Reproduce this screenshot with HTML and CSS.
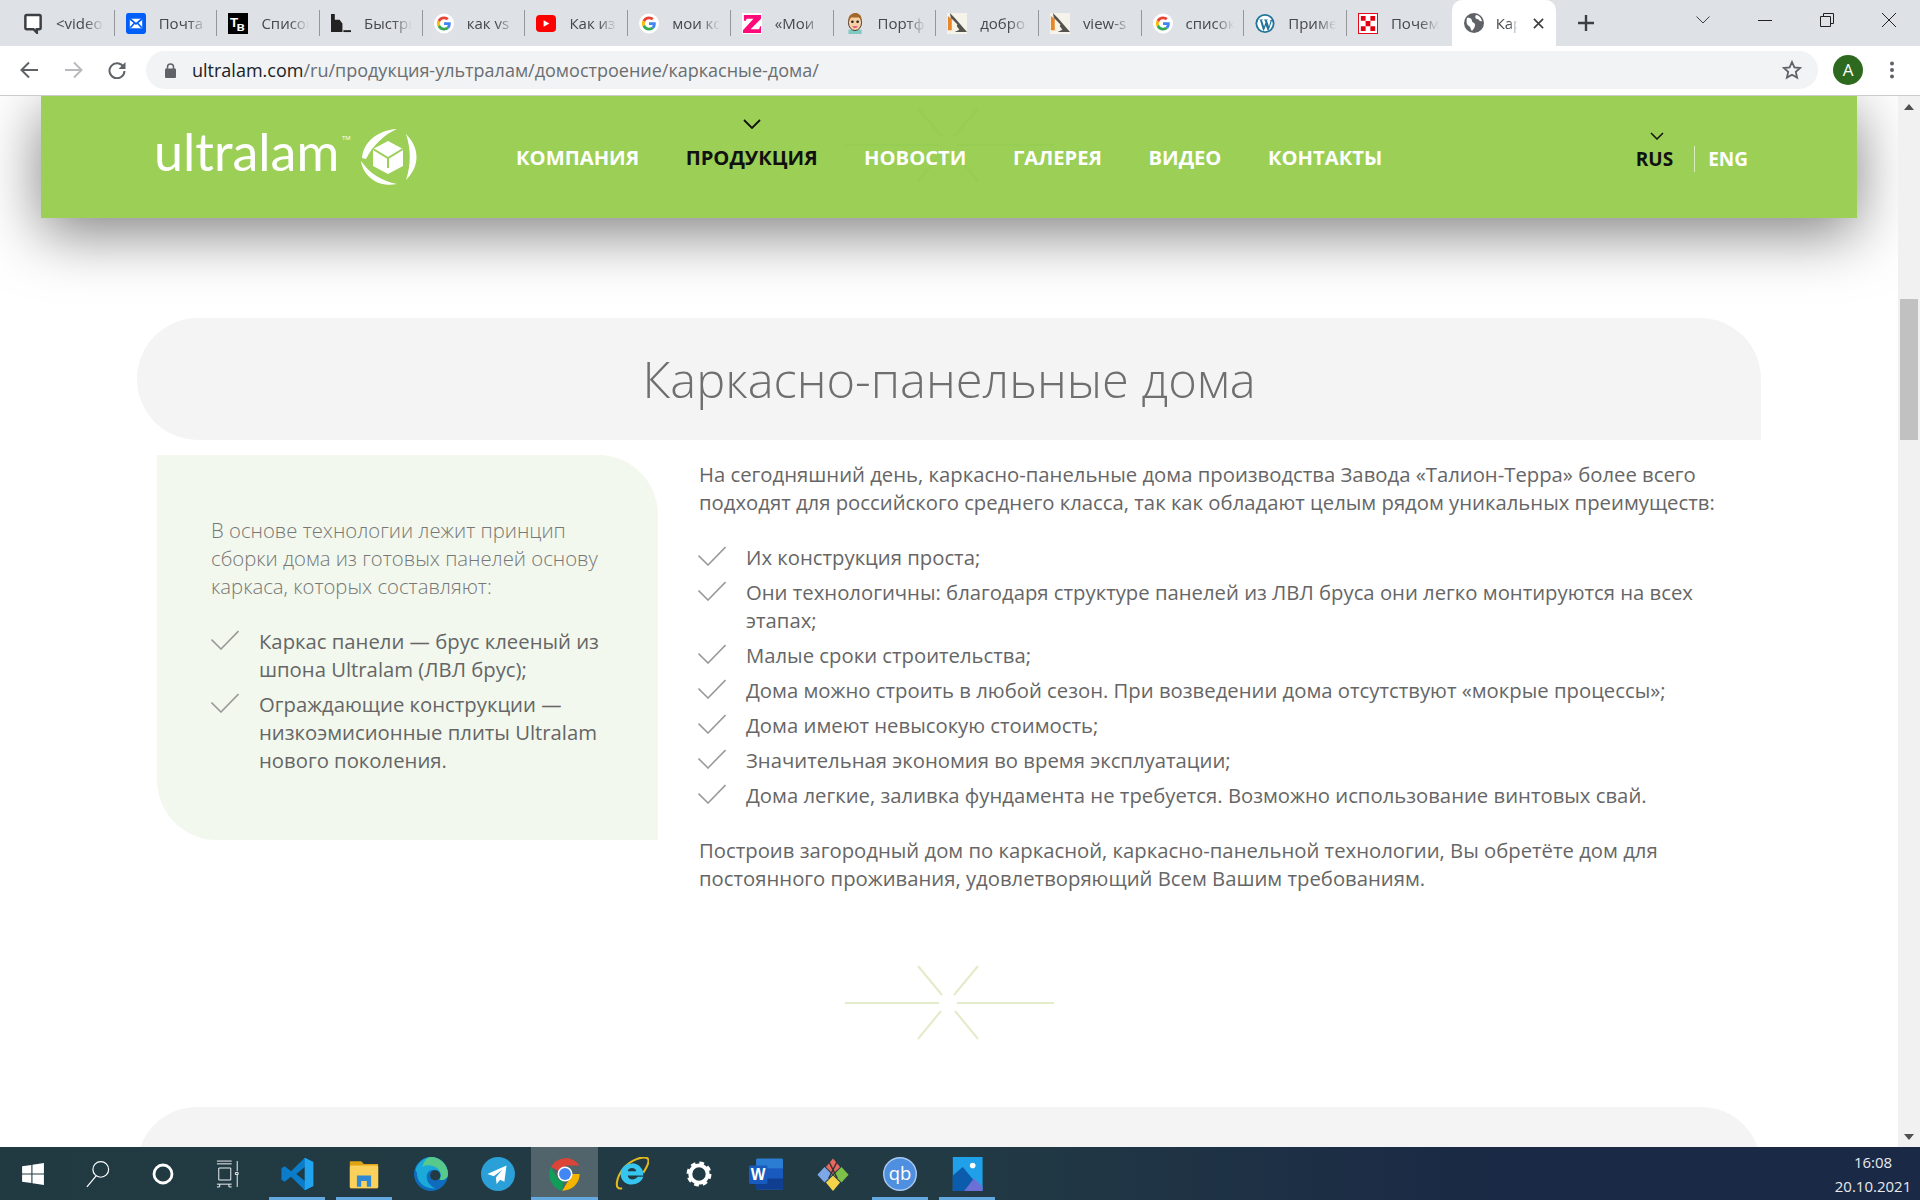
FILE: index.html
```html
<!DOCTYPE html>
<html lang="ru">
<head>
  <meta charset="UTF-8" />
  <title>Каркасно-панельные дома</title>
  <link rel="stylesheet" href="styles.css">
</head>
<body>
  <!-- shared icons -->
  <svg class="defs" width="0" height="0">
    <symbol id="i-g" viewBox="-10 -10 68 68">
      <circle cx="24" cy="24" r="34" fill="#fff"/>
      <path fill="#EA4335" d="M24 9.5c3.54 0 6.71 1.22 9.21 3.6l6.85-6.85C35.9 2.38 30.47 0 24 0 14.62 0 6.51 5.38 2.56 13.22l7.98 6.19C12.43 13.72 17.74 9.5 24 9.5z"/>
      <path fill="#4285F4" d="M46.98 24.55c0-1.57-.15-3.09-.38-4.55H24v9.02h12.94c-.58 2.96-2.26 5.48-4.78 7.18l7.73 6c4.51-4.18 7.09-10.36 7.09-17.65z"/>
      <path fill="#FBBC05" d="M10.53 28.59c-.48-1.45-.76-2.99-.76-4.59s.27-3.14.76-4.59l-7.98-6.19C.92 16.46 0 20.12 0 24c0 3.88.92 7.54 2.56 10.78l7.97-6.19z"/>
      <path fill="#34A853" d="M24 48c6.48 0 11.93-2.13 15.89-5.81l-7.73-6c-2.15 1.45-4.92 2.3-8.16 2.3-6.26 0-11.57-4.22-13.47-9.91l-7.98 6.19C6.51 42.62 14.62 48 24 48z"/>
    </symbol>
    <symbol id="i-fox" viewBox="0 0 21 22">
      <rect width="21" height="22" fill="#f6f3ea"/>
      <path d="M1 3 L8 9 L6 18 H1z" fill="#e8872a"/>
      <path d="M3 0 L8 5 L21 20 H8 L13 17.500 L4 5z" fill="#55534e"/>
      <path d="M5 6 L11 12 L8 17 L5 18z" fill="#f9f3e6"/>
    </symbol>
    <symbol id="i-check" viewBox="0 0 28 20">
      <path d="M.5 9.5L10 19 27.5 1" fill="none" stroke="#9a9a9a" stroke-width="1.6"/>
    </symbol>
    <symbol id="i-star" viewBox="0 0 216 76">
      <path d="M0 38H94M112 38H209M73 1L97 30M133 1L109 30M96 46L73 74M110 46L133 74" fill="none" stroke-width="2"/>
    </symbol>
  </svg>

  <!-- browser tabs -->
  <div class="tabstrip">
    <div class="tab">
      <svg class="tab-icon" viewBox="0 0 20 22"><path d="M3.5 2h13A1.5 1.5 0 0 1 18 3.5v12a1.5 1.5 0 0 1-1.5 1.5H14v3.5L10.5 17h-7A1.5 1.5 0 0 1 2 15.500v-12A1.500 1.500 0 0 1 3.500 2z" fill="#fff" stroke="#3c4043" stroke-width="2.600"/></svg>
      <span class="tab-title">&lt;video</span>
    </div>
    <div class="tab">
      <svg class="tab-icon" viewBox="0 0 21 22"><rect width="21" height="22" rx="2.500" fill="#005ff9"/><rect x="4" y="6" width="13" height="10" fill="#fff"/><path d="M4 6l6.500 5.500L17 6M4.500 15.500l4.500-5M16.500 15.500l-4.500-5" fill="none" stroke="#005ff9" stroke-width="1.800"/></svg>
      <span class="tab-title">Почта</span>
    </div>
    <div class="tab">
      <svg class="tab-icon" viewBox="0 0 21 22"><rect width="21" height="29" fill="#000"/><text x="2" y="15" class="tp-letters">Т</text><text x="9" y="19" class="tp-letters">в</text></svg>
      <span class="tab-title">Список</span>
    </div>
    <div class="tab">
      <svg class="tab-icon" viewBox="0 0 21 22"><path d="M0 1h4v6h5l3 4v9H0z" fill="#222"/><rect x="13" y="18" width="8" height="2" fill="#222"/></svg>
      <span class="tab-title">Быстрый</span>
    </div>
    <div class="tab"><svg class="tab-icon"><use href="#i-g"/></svg><span class="tab-title">как vs</span></div>
    <div class="tab">
      <svg class="tab-icon" viewBox="0 0 21 22"><rect y="2" width="21" height="18" rx="4" fill="#f00"/><path d="M8 7.500v7l6-3.500z" fill="#fff"/></svg>
      <span class="tab-title">Как из</span>
    </div>
    <div class="tab"><svg class="tab-icon"><use href="#i-g"/></svg><span class="tab-title">мои ко</span></div>
    <div class="tab">
      <svg class="tab-icon" viewBox="0 0 21 22"><rect width="21" height="22" fill="#fff"/><path d="M2 2h18v4L9 17h9l1-3h1v7H1v-3L12 6H5L4 8H2z" fill="#ff0a78"/></svg>
      <span class="tab-title">«Мои</span>
    </div>
    <div class="tab">
      <svg class="tab-icon" viewBox="0 0 21 24"><rect x="3" y="19" width="15" height="5" fill="#7fc9c4"/><ellipse cx="10.500" cy="11" rx="7.500" ry="9" fill="#f6cfa4" stroke="#3a2a1a"/><path d="M3 10C2 3 7 0 11 0s8 3 7 10l-2-5H6z" fill="#a5682c"/><circle cx="7.500" cy="10" r="1.500" fill="#222"/><circle cx="13.500" cy="10" r="1.500" fill="#222"/><path d="M7 15q3.500 4 7 0z" fill="#e0457b"/></svg>
      <span class="tab-title">Портф</span>
    </div>
    <div class="tab"><svg class="tab-icon"><use href="#i-fox"/></svg><span class="tab-title">добро</span></div>
    <div class="tab"><svg class="tab-icon"><use href="#i-fox"/></svg><span class="tab-title">view-s</span></div>
    <div class="tab"><svg class="tab-icon"><use href="#i-g"/></svg><span class="tab-title">список</span></div>
    <div class="tab">
      <svg class="tab-icon" viewBox="0 0 22 22"><circle cx="11" cy="11" r="10.500" fill="#21759b"/><circle cx="11" cy="11" r="8.500" fill="#fff"/><path d="M4.500 6.500h4.200v.6l-1 .2 2.300 7 1.500-4.500-.9-2.500-.8-.2v-.6h4.300v.6l-1 .2 2.300 7 1.500-5.500c.3-1.200-.3-1.500-1-1.700h3l-4 11.500h-1l-2-5.500-2 5.500h-1L5.500 7.300z" fill="#21759b"/></svg>
      <span class="tab-title">Приме</span>
    </div>
    <div class="tab tab-last">
      <svg class="tab-icon" viewBox="0 0 21 22"><rect x=".5" y=".5" width="20" height="21" fill="#fff" stroke="#e3000f"/><path d="M3 3h5v5H3zM13 3h5v5h-5zM8 8.500h5V14H8zM3 14h5v5H3zM13 14h5v5h-5z" fill="#e3000f"/></svg>
      <span class="tab-title">Почем</span>
    </div>
    <div class="tab-active">
      <svg class="tab-icon" viewBox="0 0 20 20"><circle cx="10" cy="10" r="10" fill="#5f6368"/><path d="M3 5c3-1 5 1 5 3s3 1 3 4-2 4-3 6c-2-2-1-4-3-5s-3-3-2-8zM12 2c3 0 5 3 6 6-3 1-3-2-5-2s-2-3-1-4z" fill="#fff"/></svg>
      <span class="tab-title tab-title-short">Кар</span>
      <svg class="tab-close" viewBox="0 0 12 12"><path d="M1 1l10 10M11 1L1 11" stroke="#3c4043" stroke-width="1.800"/></svg>
    </div>
    <svg class="new-tab" viewBox="0 0 16 16"><path d="M8 0v16M0 8h16" stroke="#3c4043" stroke-width="2.400"/></svg>
    <div class="win-controls">
      <svg class="win-chevron" viewBox="0 0 14 8"><path d="M.5.500L7 7 13.500.5" fill="none" stroke="#3c4043"/></svg>
      <svg class="win-btn" viewBox="0 0 14 14"><path d="M0 7.500h14" stroke="#222"/></svg>
      <svg class="win-btn" viewBox="0 0 14 14"><path d="M.5 3.500h10v10H.5zM3.500 3.500v-3h10v10h-3" fill="none" stroke="#222"/></svg>
      <svg class="win-btn" viewBox="0 0 14 14"><path d="M0 0l14 14M14 0L0 14" stroke="#222"/></svg>
    </div>
  </div>

  <!-- address bar -->
  <div class="toolbar">
    <svg class="nav-arrow" viewBox="0 0 18 18"><path d="M18 9H2M9 1.500L1.500 9 9 16.500" fill="none" stroke="#5f6368" stroke-width="2"/></svg>
    <svg class="nav-arrow nav-forward" viewBox="0 0 18 18"><path d="M0 9h16M9 1.500L16.500 9 9 16.500" fill="none" stroke="#b8babd" stroke-width="2"/></svg>
    <svg class="nav-arrow" viewBox="0 0 18 18"><path d="M15.500 6A7.500 7.500 0 1 0 16.500 10" fill="none" stroke="#5f6368" stroke-width="2"/><path d="M17.500 1v7h-7z" fill="#5f6368"/></svg>
    <div class="omnibox">
      <svg class="lock" viewBox="0 0 11 15"><path d="M2.500 6V4a3 3 0 0 1 6 0v2" fill="none" stroke="#5f6368" stroke-width="1.500"/><rect y="5.500" width="11" height="9.500" rx="1" fill="#5f6368"/></svg>
      <span class="url"><span class="url-host">ultralam.com</span>/ru/продукция-ультралам/домостроение/каркасные-дома/</span>
      <svg class="bookmark" viewBox="0 0 20 20"><path d="M10 2l2.400 5.400 5.800.6-4.400 3.900 1.300 5.700L10 14.700l-5.100 2.900 1.300-5.700L1.800 8l5.800-.6z" fill="none" stroke="#5f6368" stroke-width="1.800"/></svg>
    </div>
    <div class="avatar">A</div>
    <svg class="menu-dots" viewBox="0 0 4 18"><circle cx="2" cy="2.500" r="2" fill="#5f6368"/><circle cx="2" cy="9" r="2" fill="#5f6368"/><circle cx="2" cy="15.500" r="2" fill="#5f6368"/></svg>
  </div>

  <div class="viewport">
    <div class="page">
      <header class="site-head">
        <svg class="head-star"><use href="#i-star"/></svg>
        <div class="logo">
          <span class="logo-word">ultralam</span><span class="logo-tm">TM</span>
          <svg class="logo-mark" viewBox="0 0 58 58">
            <path d="M2 30C3 15 17 2 37 1 25 6 13 17 6 31z" fill="#fff"/>
            <path d="M1 33C10 46 22 53 37 56 18 60 3 48 1 33z" fill="#fff"/>
            <path d="M46 6C60 20 60 38 46 52 51 37 51 21 46 6z" fill="#fff"/>
            <path d="M28 13L43 21V38L28 46 13 38V21z" fill="#fff"/>
            <path d="M13 21L28 30 43 21M28 30V40" fill="none" stroke="#9bcf55" stroke-width="2"/>
          </svg>
        </div>
        <nav class="main-nav">
          <a class="nav-item">КОМПАНИЯ</a>
          <a class="nav-item nav-current">ПРОДУКЦИЯ<svg class="nav-chevron" viewBox="0 0 18 10"><path d="M1 1l8 8 8-8" fill="none" stroke="#111" stroke-width="1.800"/></svg></a>
          <a class="nav-item">НОВОСТИ</a>
          <a class="nav-item">ГАЛЕРЕЯ</a>
          <a class="nav-item">ВИДЕО</a>
          <a class="nav-item">КОНТАКТЫ</a>
        </nav>
        <div class="lang">
          <a class="lang-item lang-current">RUS<svg class="lang-chevron" viewBox="0 0 14 8"><path d="M1 1l6 6 6-6" fill="none" stroke="#111" stroke-width="1.500"/></svg></a>
          <a class="lang-item lang-other">ENG</a>
        </div>
      </header>

      <section class="panel-title">
        <h1>Каркасно-панельные дома</h1>
      </section>

      <div class="columns">
        <aside class="side-card">
          <p class="side-lead">В основе технологии лежит принцип сборки дома из готовых панелей основу каркаса, которых составляют:</p>
          <ul class="checks">
            <li><svg class="check"><use href="#i-check"/></svg><span>Каркас панели — брус клееный из шпона Ultralam (ЛВЛ брус);</span></li>
            <li><svg class="check"><use href="#i-check"/></svg><span>Ограждающие конструкции — низкоэмисионные плиты Ultralam нового поколения.</span></li>
          </ul>
        </aside>
        <div class="body-text">
          <p>На сегодняшний день, каркасно-панельные дома производства Завода «Талион-Терра» более всего подходят для российского среднего класса, так как обладают целым рядом уникальных преимуществ:</p>
          <ul class="checks">
            <li><svg class="check"><use href="#i-check"/></svg><span>Их конструкция проста;</span></li>
            <li><svg class="check"><use href="#i-check"/></svg><span>Они технологичны: благодаря структуре панелей из ЛВЛ бруса они легко монтируются на всех этапах;</span></li>
            <li><svg class="check"><use href="#i-check"/></svg><span>Малые сроки строительства;</span></li>
            <li><svg class="check"><use href="#i-check"/></svg><span>Дома можно строить в любой сезон. При возведении дома отсутствуют «мокрые процессы»;</span></li>
            <li><svg class="check"><use href="#i-check"/></svg><span>Дома имеют невысокую стоимость;</span></li>
            <li><svg class="check"><use href="#i-check"/></svg><span>Значительная экономия во время эксплуатации;</span></li>
            <li><svg class="check"><use href="#i-check"/></svg><span>Дома легкие, заливка фундамента не требуется. Возможно использование винтовых свай.</span></li>
          </ul>
          <p>Построив загородный дом по каркасной, каркасно-панельной технологии, Вы обретёте дом для постоянного проживания, удовлетворяющий Всем Вашим требованиям.</p>
        </div>
      </div>

      <div class="divider"><svg class="divider-star"><use href="#i-star"/></svg></div>
      <section class="panel-next"></section>
    </div>

    <div class="scrollbar">
      <div class="scroll-up"></div>
      <div class="scroll-thumb"></div>
      <div class="scroll-down"></div>
    </div>
  </div>

  <!-- windows taskbar -->
  <footer class="taskbar">
    <div class="sys-slot">
      <svg class="sys-icon" viewBox="0 0 22 22"><path d="M1 4l8.500-1.300V10.500H1zM10.500 2.500L21 1v9.500H10.500zM1 11.500h8.500v7.800L1 18zM10.500 11.500H21V21l-10.500-1.500z" fill="#fff"/></svg>
    </div>
    <div class="sys-slot">
      <svg class="sys-icon" viewBox="0 0 26 30"><circle cx="16" cy="10" r="8.500" fill="none" stroke="#fff" stroke-width="1.300"/><path d="M11 17L1 29" stroke="#fff" stroke-width="1.300"/></svg>
    </div>
    <div class="sys-slot">
      <svg class="sys-icon" viewBox="0 0 24 24"><circle cx="12" cy="12" r="9" fill="none" stroke="#fff" stroke-width="2.800"/></svg>
    </div>
    <div class="sys-slot">
      <svg class="sys-icon" viewBox="0 0 26 30"><path d="M1 1h16M1 4h16M3 8.500h13v13H3zM1 26h16M1 29h3M14 29h3M4 26v3M14 26v3M23 1v11M23 16v13M21 13.500h3v2h-3z" fill="none" stroke="#fff"/></svg>
    </div>

    <div class="app"><span class="app-run"></span>
      <svg class="app-icon" viewBox="0 0 24 24"><path fill-rule="evenodd" d="M17.500.5L23.500 3.500v17l-6 3L7.800 14 3.300 17.500 1 16V8l2.300-1.500L7.800 10zM17.500 7l-6 5 6 5z" fill="#0a7cc9"/><path d="M17.500.5l6 3v17l-6 3z" fill="#22a3ee"/></svg>
    </div>
    <div class="app"><span class="app-run"></span>
      <svg class="app-icon" viewBox="0 0 24 24"><path d="M2 3h8l2 2h10v17H2z" fill="#e0a313"/><rect x="2" y="6" width="20" height="16" rx="1" fill="#fbd15c"/><path d="M7 21v-8h10v8h-3v-4h-4v4z" fill="#2f8ad3"/></svg>
    </div>
    <div class="app">
      <svg class="app-icon" viewBox="0 0 24 24"><circle cx="12" cy="12" r="12" fill="#0f6cbd"/><path d="M1 9C3 3 8 0 12 0c6 0 12 5 12 12 0 3-3 5-6 4 2-3 0-7-4-7-3 0-5 2-5 5 0 4 3 7 6 8-6 1-13-3-13-11z" fill="#1ba9d9"/><path d="M12 0c6 0 12 5 12 12 0 3-3 5-6 4 2-3 1-7-3-9C13 6 9 5 6 7c1-4 3-7 6-7z" fill="#57c98a"/><circle cx="15" cy="13" r="3.600" fill="#233a42"/></svg>
    </div>
    <div class="app">
      <svg class="app-icon" viewBox="0 0 24 24"><circle cx="12" cy="12" r="12" fill="#2a9fd8"/><path d="M18 6L4.500 12l4.500 1.500L15 9l-4.500 5.500L11 19l2.500-3 3 1.500z" fill="#fff"/></svg>
    </div>
    <div class="app app-active"><span class="app-run"></span>
      <svg class="app-icon" viewBox="0 0 24 24"><path d="M12 12L2 7A12 12 0 0 1 22.400 6H12z" fill="#db4437"/><path d="M12 12L8 17 2 7A12 12 0 0 0 10 23.800z" fill="#0f9d58"/><path d="M12 12h10.400A12 12 0 0 1 10 23.800L16 14z" fill="#f4b400"/><circle cx="12" cy="12" r="5.300" fill="#fff"/><circle cx="12" cy="12" r="4.200" fill="#4285f4"/></svg>
    </div>
    <div class="app">
      <svg class="app-icon" viewBox="0 0 24 24"><path d="M5 22C-1 24 1 14 6 8S20-1 23 1c2 2-1 7-3 10" fill="none" stroke="#e2b81f" stroke-width="1.500"/><path d="M12 4.500a8 8 0 0 1 8 8.500H9c.3 3 4.500 4 7 1h4c-2 7-15 8-16-1.500C3.500 8 7 4.500 12 4.500zM9 10h6c-.5-3-5.500-3-6 0z" fill="#35c5ee"/></svg>
    </div>
    <div class="app">
      <svg class="gear-icon" viewBox="0 0 24 24"><circle cx="12" cy="12" r="8" fill="none" stroke="#fff" stroke-width="3.600"/><circle cx="12" cy="12" r="9.800" fill="none" stroke="#fff" stroke-width="3.400" stroke-dasharray="4.200 3.500"/></svg>
    </div>
    <div class="app">
      <svg class="app-icon" viewBox="0 0 24 24"><rect x="5" y="1" width="19" height="22" rx="1" fill="#2b7cd3"/><rect x="5" y="8" width="19" height="7" fill="#185abd"/><rect x="5" y="15" width="19" height="8" fill="#103f91"/><rect y="6" width="13" height="13" rx="1" fill="#185abd"/><text x="6.500" y="16" class="word-letter">W</text></svg>
    </div>
    <div class="app">
      <svg class="app-icon" viewBox="0 0 24 24"><path d="M12 1l5 6-5 5-5-5z" fill="#e8675f"/><path d="M6 7l5.500 5.500L6 18l-5-5.500z" fill="#7ea7e8"/><path d="M18 7l5 5.500L18 18l-5.500-5.500z" fill="#7fc04a"/><path d="M12 13l5 5-5 6-5-6z" fill="#f5d44c"/><path d="M9 3l6 12M15 3L9 15" stroke="#333" stroke-width="1"/></svg>
    </div>
    <div class="app"><span class="app-run"></span>
      <svg class="app-icon" viewBox="0 0 24 24"><circle cx="12" cy="12" r="11.500" fill="#4f8fe0" stroke="#a8c8f0"/><text x="12" y="16.500" class="qb-letters">qb</text></svg>
    </div>
    <div class="app"><span class="app-run"></span>
      <svg class="app-icon" viewBox="0 0 24 24"><rect x="2" width="21" height="24" fill="#1fa0e8"/><circle cx="16" cy="6" r="2" fill="#fff"/><path d="M2 24V13l7-6 14 17z" fill="#0b5cad"/><path d="M10 24l7-9 6 6v3z" fill="#6c6fd6"/></svg>
    </div>

    <div class="clock">
      <div>16:08</div>
      <div>20.10.2021</div>
    </div>
  </footer>
</body>
</html>
```

FILE: styles.css
```css
* {
  box-sizing: border-box;
}

html, body {
  height: 100%;
}

body {
  margin: 0;
  display: flex;
  flex-direction: column;
  overflow: hidden;
  font-family: "Open Sans", sans-serif;
  background: #fff;
}

.defs {
  position: absolute;
}

/* tab strip */
.tabstrip {
  height: 46px;
  flex: none;
  display: flex;
  padding-left: 12px;
  background: #dee1e6;
}

.tab {
  width: 102.7px;
  height: 26px;
  margin-top: 10px;
  padding-left: 11px;
  display: flex;
  align-items: center;
  gap: 13px;
  border-right: 1px solid #94989d;
}

.tab-last {
  width: 104.7px;
  border-right: none;
}

.tab-icon {
  width: 20px;
  height: 21px;
  flex: none;
}

.tp-letters {
  font: bold 14px "Liberation Sans", sans-serif;
  fill: #fff;
}

.tab-title {
  width: 48px;
  overflow: hidden;
  white-space: nowrap;
  font-size: 15px;
  color: #45484c;
  -webkit-mask-image: linear-gradient(to right, #000 60%, transparent 100%);
  mask-image: linear-gradient(to right, #000 60%, transparent 100%);
}

.tab-active {
  width: 104px;
  height: 46px;
  flex: none;
  padding-left: 12px;
  display: flex;
  align-items: center;
  gap: 12px;
  background: #fff;
  border-radius: 10px 10px 0 0;
}

.tab-active .tab-icon {
  width: 20px;
  height: 20px;
}

.tab-title-short {
  width: 22px;
}

.tab-close {
  width: 11px;
  height: 11px;
  flex: none;
  margin-left: 3px;
}

.new-tab {
  width: 16px;
  height: 16px;
  margin: 15px 0 0 22px;
  flex: none;
}

.win-controls {
  margin-left: auto;
  display: flex;
  align-items: center;
  height: 40px;
}

.win-chevron {
  width: 14px;
  height: 8px;
  margin-right: 48px;
}

.win-btn {
  width: 14px;
  height: 14px;
  margin-right: 48px;
}

.win-btn:last-child {
  margin-right: 24px;
}

/* address bar */
.toolbar {
  height: 50px;
  flex: none;
  display: flex;
  align-items: center;
  padding: 0 0 1px 20px;
  background: #fff;
  border-bottom: 1px solid #ccc;
}

.nav-arrow {
  width: 18px;
  height: 18px;
  margin-right: 27px;
  flex: none;
}

.nav-forward {
  margin-right: 25px;
}

.omnibox {
  width: 1672px;
  height: 38px;
  margin-left: -7px;
  padding: 0 16px 0 19px;
  flex: none;
  display: flex;
  align-items: center;
  background: #f1f3f4;
  border-radius: 19px;
}

.lock {
  width: 11px;
  height: 15px;
  flex: none;
}

.url {
  margin-left: 16px;
  font-size: 18px;
  color: #6a6e72;
  white-space: nowrap;
}

.url-host {
  color: #202124;
}

.bookmark {
  width: 20px;
  height: 20px;
  margin-left: auto;
}

.avatar {
  width: 30px;
  height: 30px;
  margin-left: 15px;
  flex: none;
  border-radius: 50%;
  background: #2d6a1f;
  color: #fff;
  font-size: 17px;
  line-height: 30px;
  text-align: center;
}

.menu-dots {
  width: 4px;
  height: 18px;
  margin-left: 27px;
  flex: none;
}

/* page */
.viewport {
  flex: 1;
  min-height: 0;
  display: flex;
}

.page {
  flex: 1;
  min-width: 0;
  overflow: hidden;
  color: #666;
}

.site-head {
  position: relative;
  height: 122px;
  margin: 0 41px;
  display: flex;
  align-items: center;
  background: #9bcf55;
  box-shadow: 0 15px 60px rgba(0, 0, 0, 0.5);
}

.head-star {
  position: absolute;
  left: 804px;
  top: 11px;
  width: 216px;
  height: 76px;
  stroke: #98cd53;
}

.logo {
  position: relative;
  width: 475px;
  height: 70px;
  padding-left: 113px;
  display: flex;
  align-items: center;
  flex: none;
}

.logo-word {
  font-family: "Lato", sans-serif;
  font-weight: 400;
  font-size: 52px;
  line-height: 60px;
  color: #fff;
  margin-top: -12px;
}

.logo-tm {
  position: absolute;
  left: 301px;
  top: 12px;
  font-size: 6px;
  color: #fff;
}

.logo-mark {
  position: absolute;
  left: 319px;
  top: 6px;
  width: 58px;
  height: 58px;
}

.main-nav {
  display: flex;
  gap: 46.5px;
}

.nav-item {
  position: relative;
  font-size: 20.2px;
  font-weight: 700;
  color: #fff;
}

.nav-current {
  color: #111;
}

.nav-chevron {
  position: absolute;
  left: 57px;
  top: -24px;
  width: 18px;
  height: 10px;
}

.lang {
  margin-left: auto;
  margin-right: 109px;
  margin-top: 3px;
  display: flex;
  align-items: center;
}

.lang-item {
  position: relative;
  font-size: 19px;
  font-weight: 700;
  line-height: 26px;
  color: #fff;
}

.lang-current {
  color: #111;
  padding-right: 21px;
  border-right: 1px solid #d9edbc;
}

.lang-other {
  padding-left: 13px;
}

.lang-chevron {
  position: absolute;
  left: 14px;
  top: -14px;
  width: 14px;
  height: 8px;
}

.panel-title {
  height: 122px;
  margin: 100px 137px 0;
  display: flex;
  align-items: center;
  justify-content: center;
  background: #f4f4f4;
  border-radius: 61px 61px 0 61px;
}

h1 {
  margin: 0;
  font-size: 48.8px;
  font-weight: 300;
  color: #6f6f6f;
}

.columns {
  display: flex;
  gap: 41px;
  margin: 0 137px 0 157px;
  font-size: 20.3px;
  line-height: 28px;
}

.side-card {
  width: 501px;
  height: 385px;
  margin-top: 15px;
  padding: 61px 54px 0;
  flex: none;
  background: #f2f8ed;
  border-radius: 0 60px 0 60px;
}

.side-lead {
  margin: 0 0 27px;
  font-weight: 300;
  color: #777;
}

.checks {
  margin: 0;
  padding: 0;
  list-style: none;
}

.checks li {
  display: flex;
  gap: 20px;
  margin-bottom: 7px;
}

.check {
  width: 28px;
  height: 20px;
  margin-top: 3px;
  flex: none;
}

.body-text {
  flex: 1;
  padding-top: 20px;
}

.body-text p {
  margin: 0 0 27px;
}

.body-text .checks {
  margin: 0 0 27px -1px;
}

.divider {
  height: 76px;
  margin-top: 46px;
  display: flex;
  justify-content: center;
}

.divider-star {
  width: 216px;
  height: 76px;
  margin-left: 7px;
  stroke: #e2ecc8;
}

.panel-next {
  height: 120px;
  margin: 66px 137px 0;
  background: #f4f4f4;
  border-radius: 61px 61px 0 61px;
}

/* scrollbar */
.scrollbar {
  width: 22px;
  flex: none;
  position: relative;
  background: #f1f1f1;
}

.scroll-thumb {
  position: absolute;
  left: 2px;
  right: 2px;
  top: 203px;
  height: 141px;
  background: #c1c1c1;
}

.scroll-up,
.scroll-down {
  position: absolute;
  left: 6px;
  width: 0;
  height: 0;
  border-left: 5px solid transparent;
  border-right: 5px solid transparent;
}

.scroll-up {
  top: 8px;
  border-bottom: 6px solid #505050;
}

.scroll-down {
  bottom: 7px;
  border-top: 6px solid #505050;
}

/* taskbar */
.taskbar {
  height: 53px;
  flex: none;
  display: flex;
  background: linear-gradient(to right, #213a42 0%, #223a44 50%, #1a2a45 76%, #1a2945 100%);
}

.sys-slot {
  width: 65px;
  display: flex;
  align-items: center;
  justify-content: center;
}

.sys-slot:nth-child(4) {
  margin-right: 3px;
}

.sys-icon {
  width: 24px;
  height: 28px;
}

.app {
  position: relative;
  width: 67px;
  display: flex;
  align-items: center;
  justify-content: center;
}

.app-active {
  background: #51646c;
}

.app-icon {
  width: 34px;
  height: 34px;
}

.gear-icon {
  width: 26px;
  height: 26px;
}

.app-run {
  position: absolute;
  left: 6px;
  right: 5px;
  bottom: 0;
  height: 3px;
  background: #63a8de;
}

.app-active .app-run {
  left: 0;
  right: 0;
}

.word-letter {
  font: bold 11px "Liberation Sans", sans-serif;
  fill: #fff;
  text-anchor: middle;
}

.qb-letters {
  font: 13px "Open Sans", sans-serif;
  fill: #fff;
  text-anchor: middle;
}

.clock {
  margin-left: auto;
  width: 100px;
  margin-right: -3px;
  padding-top: 3px;
  text-align: center;
  font-size: 15px;
  line-height: 24px;
  color: #e8eaed;
}
```
